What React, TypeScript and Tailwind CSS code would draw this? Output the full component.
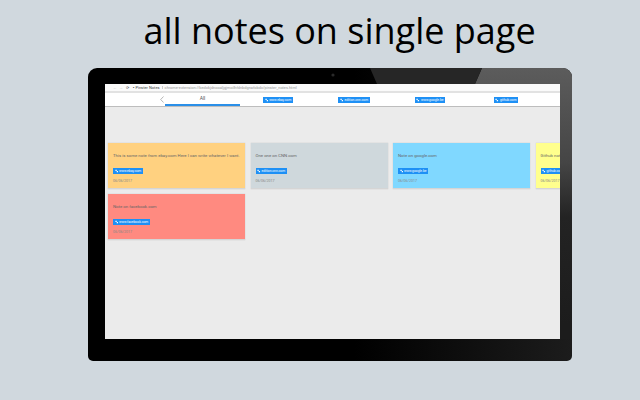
import React from 'react';

const notes = [
  { text: 'This is some note from ebay.com Here I can write whatever I want.', site: 'www.ebay.com', bg: 'bg-[#ffd180]' },
  { text: 'One one on CNN.com', site: 'edition.cnn.com', bg: 'bg-[#cfd8dc]' },
  { text: 'Note on google.com', site: 'www.google.be', bg: 'bg-[#80d8ff]' },
  { text: 'Github note', site: 'github.com', bg: 'bg-[#ffff8d]' },
  { text: 'Note on facebook.com', site: 'www.facebook.com', bg: 'bg-[#ff8a80]' },
];

const tabs = ['www.ebay.com', 'edition.cnn.com', 'www.google.be', 'github.com'];

const Chip = ({ site }: { site: string }) => (
  <span className="flex h-[6px] items-center gap-[1px] bg-[#1e90f5] px-[1.5px] text-[3.3px] leading-[6px] text-white whitespace-nowrap">
    <svg width="3.5" height="4" viewBox="0 0 8 8" className="shrink-0"><path d="M1 1h3v3h3v3H4V4H1z" fill="#fff" /></svg>
    <span className="block h-[6px] leading-[6.5px]">{site}</span>
  </span>
);

const NoteCard = ({ note }: { note: (typeof notes)[number] }) => (
  <div className={`${note.bg} flex h-[45.5px] w-[137px] shrink-0 flex-col border-b border-[#d5d5d5] pl-[5px] pt-[10px] shadow-[0_0_1px_#bbb]`}>
    <p className="h-[5px] whitespace-nowrap text-[4.3px] leading-[5px] text-[#666]">{note.text}</p>
    <div className="mt-[10px] flex h-[6px]"><Chip site={note.site} /></div>
    <p className="mt-[5px] text-[3.6px] leading-[5px] text-[#888]">06/06/2017</p>
  </div>
);

export default function App() {
  return (
    <div className="flex h-[400px] w-[640px] flex-col overflow-hidden bg-[#d0d8de] font-['Roboto',sans-serif]">
      <h1 className="h-[68px] pl-[39px] pt-[6px] text-center font-['Open_Sans',sans-serif] text-[36px] leading-[50px] text-black">all notes on single page</h1>

      <div className="relative ml-[88px] h-[293px] w-[484px] overflow-hidden rounded-t-[9px] rounded-b-[5px] bg-[linear-gradient(90deg,#000_0%,#000_55%,#1c1c1c_100%)] pb-[22px] pl-[17px] pr-[12px] pt-[16px]">
        {/* glare on the top right of the bezel */}
        <svg className="absolute left-0 top-0" width="484" height="293" viewBox="0 0 484 293">
          <defs>
            <linearGradient id="edge" x1="0" y1="0" x2="0" y2="1">
              <stop offset="0" stopColor="#5c5c5c" />
              <stop offset="0.35" stopColor="#454545" />
              <stop offset="0.55" stopColor="#232323" />
              <stop offset="0.95" stopColor="#1c1c1c" />
            </linearGradient>
          </defs>
          <path d="M394 0H484V271H472V16H387Z" fill="url(#edge)" />
          <path d="M282 0H394L387 16H289Z" fill="#262626" />
          <circle cx="245" cy="7" r="1.6" fill="#2a2a2a" />
        </svg>

        <div className="relative flex h-[255px] w-[455px] flex-col overflow-hidden bg-[#ebebeb]">
          {/* browser toolbar */}
          <div className="flex h-[9px] items-center border-b-2 border-[#e2e2e2] bg-[#fafafa] pl-[8px] text-[4px] leading-none whitespace-nowrap">
            <span className="text-[#ccc]">←</span>
            <span className="ml-[2px] text-[#ccc]">→</span>
            <span className="ml-[3px] text-[#555]">⟳</span>
            <span className="ml-[4px] text-[#444]">▪ Pinster Notes</span>
            <span className="ml-[2px] border-l border-[#ccc] pl-[2px] text-[3.9px] text-[#999]">chrome-extension://bedokjdnooaljgjmoilhfdnbdgnafobdc/pinster_notes.html</span>
          </div>

          {/* tabs */}
          <div className="flex h-[14px] border-b border-[#bdbdbd] bg-white">
            <div className="flex w-[60px] items-center justify-end pr-[1px]">
              <svg width="4" height="7" viewBox="0 0 4 7"><path d="M3.5 .5L.7 3.5l2.8 3" fill="none" stroke="#888" strokeWidth=".6" /></svg>
            </div>
            <div className="flex h-[13px] w-[75px] items-center justify-center border-b-2 border-[#2a8fe8] text-[5px] leading-none text-[#555]">All</div>
            {tabs.map(tab => (
              <div key={tab} className="flex w-[76px] items-center justify-center"><Chip site={tab} /></div>
            ))}
          </div>

          {/* notes */}
          <div className="flex flex-col gap-[5.5px] pl-[3px] pt-[36px]">
            <div className="flex gap-[5.5px]">
              {notes.slice(0, 4).map(n => <NoteCard key={n.site} note={n} />)}
            </div>
            <div className="flex">
              <NoteCard note={notes[4]} />
            </div>
          </div>
        </div>
      </div>
    </div>
  );
}
